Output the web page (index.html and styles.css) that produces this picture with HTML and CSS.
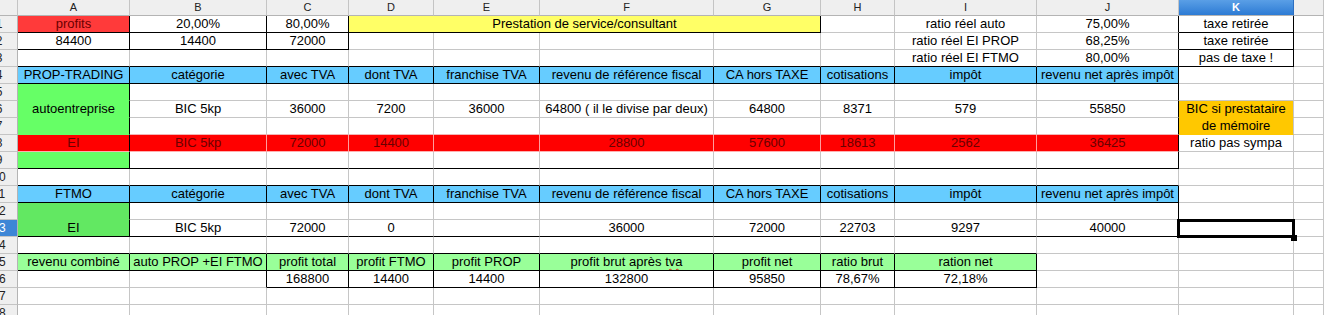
FILE: index.html
```html
<!DOCTYPE html>
<html lang="fr">
<head>
<meta charset="utf-8">
<title>Calc</title>
<link rel="stylesheet" href="styles.css">
</head>
<body>
<div class="sheet">
<!-- header -->
<div class="ch corner"></div><div class="ch">A</div><div class="ch">B</div><div class="ch">C</div><div class="ch">D</div><div class="ch">E</div><div class="ch">F</div><div class="ch">G</div><div class="ch">H</div><div class="ch">I</div><div class="ch">J</div><div class="ch chs">K</div><div class="ch"></div>
<!-- 1 -->
<div class="rh"><span>1</span></div><div class="c red1 r b">profits</div><div class="c r b">20,00%</div><div class="c r b">80,00%</div><div class="c yel span4 r b">Prestation de service/consultant</div><div class="c"></div><div class="c">ratio réel auto</div><div class="c r">75,00%</div><div class="c r b">taxe retirée</div><div class="c"></div>
<!-- 2 -->
<div class="rh"><span>2</span></div><div class="c r b">84400</div><div class="c r b">14400</div><div class="c r b">72000</div><div class="c"></div><div class="c"></div><div class="c"></div><div class="c"></div><div class="c"></div><div class="c">ratio réel EI PROP</div><div class="c r">68,25%</div><div class="c r b">taxe retirée</div><div class="c"></div>
<!-- 3 -->
<div class="rh"><span>3</span></div><div class="c b"></div><div class="c b"></div><div class="c b"></div><div class="c b"></div><div class="c b"></div><div class="c b"></div><div class="c b"></div><div class="c b"></div><div class="c b">ratio réel EI FTMO</div><div class="c r b">80,00%</div><div class="c r b">pas de taxe !</div><div class="c"></div>
<!-- 4 -->
<div class="rh"><span>4</span></div><div class="c blu r b">PROP-TRADING</div><div class="c blu r b">catégorie</div><div class="c blu r b">avec TVA</div><div class="c blu r b">dont TVA</div><div class="c blu r b">franchise TVA</div><div class="c blu r b">revenu de référence fiscal</div><div class="c blu r b">CA hors TAXE</div><div class="c blu r b">cotisations</div><div class="c blu r b">impôt</div><div class="c blu r b">revenu net après impôt</div><div class="c"></div><div class="c"></div>
<!-- 5 -->
<div class="rh"><span>5</span></div><div class="c grn r"></div><div class="c"></div><div class="c"></div><div class="c"></div><div class="c"></div><div class="c"></div><div class="c"></div><div class="c"></div><div class="c"></div><div class="c r"></div><div class="c"></div><div class="c"></div>
<!-- 6 -->
<div class="rh"><span>6</span></div><div class="c grn r">autoentreprise</div><div class="c">BIC 5kp</div><div class="c">36000</div><div class="c">7200</div><div class="c">36000</div><div class="c">64800 ( il le divise par deux)</div><div class="c">64800</div><div class="c">8371</div><div class="c">579</div><div class="c r">55850</div><div class="c org">BIC si prestataire</div><div class="c"></div>
<!-- 7 -->
<div class="rh"><span>7</span></div><div class="c grn r"></div><div class="c pk"></div><div class="c pk"></div><div class="c pk"></div><div class="c pk"></div><div class="c pk"></div><div class="c pk"></div><div class="c pk"></div><div class="c pk"></div><div class="c pk r"></div><div class="c org">de mémoire</div><div class="c"></div>
<!-- 8 -->
<div class="rh"><span>8</span></div><div class="c red r">EI</div><div class="c red">BIC 5kp</div><div class="c red">72000</div><div class="c red">14400</div><div class="c red"></div><div class="c red">28800</div><div class="c red">57600</div><div class="c red">18613</div><div class="c red">2562</div><div class="c red r">36425</div><div class="c">ratio pas sympa</div><div class="c"></div>
<!-- 9 -->
<div class="rh"><span>9</span></div><div class="c grn r b"></div><div class="c b"></div><div class="c b"></div><div class="c b"></div><div class="c b"></div><div class="c b"></div><div class="c b"></div><div class="c b"></div><div class="c b"></div><div class="c r b"></div><div class="c"></div><div class="c"></div>
<!-- 10 -->
<div class="rh"><span>10</span></div><div class="c b"></div><div class="c b"></div><div class="c b"></div><div class="c b"></div><div class="c b"></div><div class="c b"></div><div class="c b"></div><div class="c b"></div><div class="c b"></div><div class="c b"></div><div class="c"></div><div class="c"></div>
<!-- 11 -->
<div class="rh"><span>11</span></div><div class="c blu r b">FTMO</div><div class="c blu r b">catégorie</div><div class="c blu r b">avec TVA</div><div class="c blu r b">dont TVA</div><div class="c blu r b">franchise TVA</div><div class="c blu r b">revenu de référence fiscal</div><div class="c blu r b">CA hors TAXE</div><div class="c blu r b">cotisations</div><div class="c blu r b">impôt</div><div class="c blu r b">revenu net après impôt</div><div class="c"></div><div class="c"></div>
<!-- 12 -->
<div class="rh"><span>12</span></div><div class="c grn2 r"></div><div class="c"></div><div class="c"></div><div class="c"></div><div class="c"></div><div class="c"></div><div class="c"></div><div class="c"></div><div class="c"></div><div class="c r"></div><div class="c"></div><div class="c"></div>
<!-- 13 -->
<div class="rh rhs"><span>13</span></div><div class="c grn2 r b">EI</div><div class="c b">BIC 5kp</div><div class="c b">72000</div><div class="c b">0</div><div class="c b"></div><div class="c b">36000</div><div class="c b">72000</div><div class="c b">22703</div><div class="c b">9297</div><div class="c r b">40000</div><div class="c cur"></div><div class="c"></div>
<!-- 14 -->
<div class="rh"><span>14</span></div><div class="c b"></div><div class="c b"></div><div class="c b"></div><div class="c b"></div><div class="c b"></div><div class="c b"></div><div class="c b"></div><div class="c b"></div><div class="c b"></div><div class="c"></div><div class="c"></div><div class="c"></div>
<!-- 15 -->
<div class="rh"><span>15</span></div><div class="c lgn r b">revenu combiné</div><div class="c lgn r b">auto PROP +EI FTMO</div><div class="c lgn r b">profit total</div><div class="c lgn r b">profit FTMO</div><div class="c lgn r b">profit PROP</div><div class="c lgn r b">profit brut après <span class="spell">tva</span></div><div class="c lgn r b">profit net</div><div class="c lgn r b">ratio brut</div><div class="c lgn r b">ration net</div><div class="c"></div><div class="c"></div><div class="c"></div>
<!-- 16 -->
<div class="rh"><span>16</span></div><div class="c"></div><div class="c r"></div><div class="c r b">168800</div><div class="c r b">14400</div><div class="c r b">14400</div><div class="c r b">132800</div><div class="c r b">95850</div><div class="c r b">78,67%</div><div class="c r b">72,18%</div><div class="c"></div><div class="c"></div><div class="c"></div>
<!-- 17 -->
<div class="rh"><span>17</span></div><div class="c"></div><div class="c"></div><div class="c"></div><div class="c"></div><div class="c"></div><div class="c"></div><div class="c"></div><div class="c"></div><div class="c"></div><div class="c"></div><div class="c"></div><div class="c"></div>
<!-- 18 -->
<div class="rh"><span>18</span></div><div class="c"></div><div class="c"></div><div class="c"></div><div class="c"></div><div class="c"></div><div class="c"></div><div class="c"></div><div class="c"></div><div class="c"></div><div class="c"></div><div class="c"></div><div class="c"></div>
</div>
</body>
</html>
```
FILE: styles.css
```css
html, body {
  margin: 0;
  padding: 0;
  background: #ffffff;
}
body {
  width: 1324px;
  height: 315px;
  overflow: hidden;
  font-family: "Liberation Sans", Arial, sans-serif;
}
.sheet {
  display: grid;
  grid-template-columns: 18px 112px 137px 82px 85px 106px 174px 107px 74px 142px 142px 115px 1fr;
  grid-template-rows: 16px repeat(18, 17px);
}
.ch, .rh, .c {
  box-sizing: border-box;
  white-space: nowrap;
  overflow: hidden;
}
.ch {
  background: #efefef;
  border-right: 1px solid #c4c4c4;
  border-bottom: 1px solid #b4b4b4;
  font-size: 11px;
  line-height: 15px;
  text-align: center;
  color: #222;
}
.chs {
  background: linear-gradient(#5a9fe6, #2d7bd4);
  color: #fff;
  font-weight: bold;
  border-right-color: #2d6fc0;
}
.rh {
  background: #efefef;
  border-right: 1px solid #b4b4b4;
  border-bottom: 1px solid #c4c4c4;
  font-size: 12px;
  line-height: 16px;
  color: #222;
}
.rh span {
  display: block;
  width: 38px;
  margin-left: -20px;
  text-align: center;
}
.rhs {
  background: #3d86d6;
  color: #fff;
}
.c {
  background: #fff;
  border-right: 1px solid #c6c6c6;
  border-bottom: 1px solid #c6c6c6;
  font-size: 13px;
  line-height: 16px;
  text-align: center;
  color: #000;
}
.span4 { grid-column: span 4; }
.red1 { background: #ff3a3a; color: #6a0000; }
.red { background: #ff0000; color: #6a0000; border-right-color: #ff9c9c; border-bottom-color: #ffb0b0; }
.pk { border-bottom-color: #f2b4b4; }
.yel { background: #ffff66; }
.blu { background: #66ccff; }
.grn { background: #66ff66; border-bottom-color: #66ff66; }
.grn2 { background: #62e862; border-bottom-color: #62e862; }
.lgn { background: #99ff99; }
.org { background: #ffc800; border-bottom-color: #ffc800; }
.r { border-right-color: #000; }
.b { border-bottom-color: #000; }
.spell {
  text-decoration: underline wavy #e02020;
  text-decoration-thickness: 1px;
  text-underline-offset: 2px;
}
.cur {
  position: relative;
  overflow: visible;
  z-index: 2;
}
.cur::after {
  content: "";
  position: absolute;
  left: -2px;
  top: -1px;
  right: -2px;
  bottom: -2px;
  border: 3px solid #000;
}
.cur::before {
  content: "";
  position: absolute;
  right: -4px;
  bottom: -5px;
  width: 6px;
  height: 6px;
  background: #000;
  z-index: 1;
}
```
